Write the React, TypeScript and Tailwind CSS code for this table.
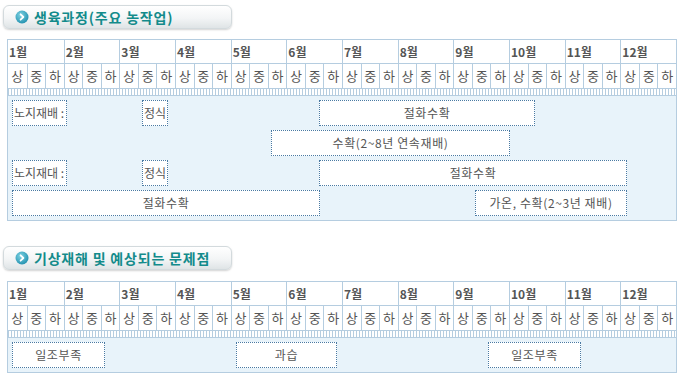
import React from "react";

const months = ["1월", "2월", "3월", "4월", "5월", "6월", "7월", "8월", "9월", "10월", "11월", "12월"];
const parts = ["상", "중", "하"];

type Bar = { ml: number; w: number; text: string; align?: "left" | "center" };

const growthRows: Bar[][] = [
  [
    { ml: 4, w: 55, text: "노지재배 :", align: "left" },
    { ml: 75, w: 26, text: "정식", align: "left" },
    { ml: 151, w: 216, text: "절화수확" },
  ],
  [{ ml: 263, w: 239, text: "수확(2~8년 연속재배)" }],
  [
    { ml: 4, w: 55, text: "노지재대 :", align: "left" },
    { ml: 75, w: 26, text: "정식", align: "left" },
    { ml: 151, w: 308, text: "절화수확" },
  ],
  [
    { ml: 4, w: 308, text: "절화수확" },
    { ml: 155, w: 152, text: "가온, 수확(2~3년 재배)" },
  ],
];

const hazardRows: Bar[][] = [
  [
    { ml: 4, w: 93, text: "일조부족" },
    { ml: 131, w: 101, text: "과습" },
    { ml: 151, w: 93, text: "일조부족" },
  ],
];

function Title({ text }: { text: string }) {
  return (
    <div className="ml-[3px] flex h-[24px] w-[229px] items-center rounded-[6px] border border-[#d3dadd] bg-[linear-gradient(#ffffff,#f3f5f6_55%,#dfe4e6)] shadow-[0_1px_2px_rgba(0,0,0,0.18)]">
      <svg width="14" height="14" viewBox="0 0 14 14" className="ml-[11px]">
        <defs>
          <radialGradient id="ic" cx="40%" cy="35%" r="70%">
            <stop offset="0%" stopColor="#7fd3e3" />
            <stop offset="100%" stopColor="#1f8fae" />
          </radialGradient>
        </defs>
        <circle cx="7" cy="7" r="6.5" fill="url(#ic)" />
        <path d="M5.6 4.3 L8.4 7 L5.6 9.7" fill="none" stroke="#fff" strokeWidth="1.8" strokeLinecap="round" strokeLinejoin="round" />
      </svg>
      <span className="ml-[5px] whitespace-nowrap text-[14px] font-bold leading-none tracking-[0.8px] text-[#138b8b]">{text}</span>
    </div>
  );
}

function BarBox({ bar }: { bar: Bar }) {
  const left = bar.align === "left";
  return (
    <div
      className={
        "flex h-[26px] shrink-0 items-center overflow-hidden whitespace-nowrap border border-dotted border-[#4a7aa3] bg-white text-[12px] leading-none text-[#555] " +
        (left ? "justify-start pl-[1px] tracking-[0px]" : "justify-center tracking-[0.6px]")
      }
      style={{ marginLeft: bar.ml, width: bar.w }}
    >
      {bar.text}
    </div>
  );
}

function Calendar({ rows }: { rows: Bar[][] }) {
  return (
    <div className="ml-[7px] w-[670px] border border-[#b5cde0]">
      <div className="grid grid-cols-12">
        {months.map((m, i) => (
          <div
            key={m}
            className={
              "flex h-[24px] items-center border-b border-[#b5cde0] pl-[1px] text-[12px] font-bold text-[#555] " +
              (i > 0 ? "border-l" : "")
            }
          >
            {m}
          </div>
        ))}
      </div>
      <div className="grid grid-cols-[repeat(36,minmax(0,1fr))]">
        {months.flatMap((m, i) =>
          parts.map((p, j) => (
            <div
              key={m + p}
              className={
                "flex h-[25px] items-center justify-center border-b border-[#b5cde0] text-[13px] text-[#555] " +
                (i > 0 || j > 0 ? "border-l" : "")
              }
            >
              {p}
            </div>
          ))
        )}
      </div>
      <div className="h-[7px] border-b border-[#b5cde0] bg-[repeating-linear-gradient(90deg,#b5cde0_0_1px,transparent_1px_3px)]" />
      <div className="flex flex-col gap-[4px] bg-[#e8f3fa] pt-[4px] pb-[4px]">
        {rows.map((r, i) => (
          <div key={i} className="flex">
            {r.map((b, k) => (
              <BarBox key={k} bar={b} />
            ))}
          </div>
        ))}
      </div>
    </div>
  );
}

export default function App() {
  return (
    <div className="h-[381px] w-[684px] overflow-hidden bg-white pt-[5px] font-['Noto_Sans_CJK_KR','Noto_Sans',sans-serif]">
      <Title text="생육과정(주요 농작업)" />
      <div className="mt-[10px]">
        <Calendar rows={growthRows} />
      </div>
      <div className="mt-[25px]">
        <Title text="기상재해 및 예상되는 문제점" />
      </div>
      <div className="mt-[11px]">
        <Calendar rows={hazardRows} />
      </div>
    </div>
  );
}
